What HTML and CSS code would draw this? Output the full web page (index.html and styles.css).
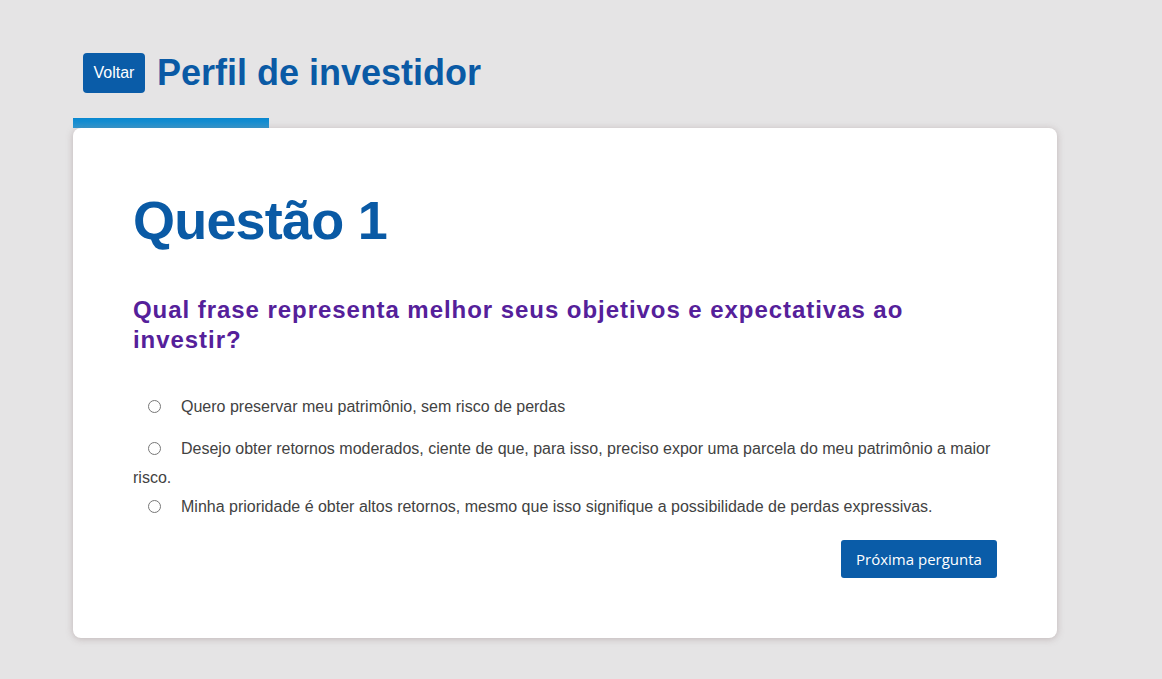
FILE: index.html
```html
<!DOCTYPE html>
<html lang="pt-BR">
<head>
<meta charset="utf-8">
<title>Perfil de investidor</title>
<link rel="stylesheet" href="styles.css">
</head>
<body>
<div class="page">
  <header class="header">
    <button class="back">Voltar</button>
    <h1 class="title">Perfil de investidor</h1>
  </header>
  <div class="tab-bar"></div>
  <main class="card">
    <h2 class="q-number">Questão 1</h2>
    <h3 class="q-text">Qual frase representa melhor seus objetivos e expectativas ao investir?</h3>
    <div class="options">
      <label class="option first"><span class="radio"></span>Quero preservar meu patrimônio, sem risco de perdas</label>
      <label class="option"><span class="radio"></span>Desejo obter retornos moderados, ciente de que, para isso, preciso expor uma parcela do meu patrimônio a maior risco.</label>
      <label class="option"><span class="radio"></span>Minha prioridade é obter altos retornos, mesmo que isso signifique a possibilidade de perdas expressivas.</label>
    </div>
    <div class="actions">
      <button class="next">Próxima pergunta</button>
    </div>
  </main>
</div>
</body>
</html>
```

FILE: styles.css
```css
html, body {
  margin: 0;
  padding: 0;
  background: #e5e4e5;
  font-family: "Liberation Sans", Arial, sans-serif;
}

.page {
  width: 984px;
  padding: 53px 0 40px 73px;
}

.header {
  display: flex;
  align-items: center;
  gap: 12px;
  padding-left: 10px;
  height: 40px;
}

.back {
  width: 62px;
  height: 40px;
  border: none;
  border-radius: 4px;
  background: #0a5ca8;
  color: #fff;
  font-family: "Liberation Sans", Arial, sans-serif;
  font-size: 16px;
  padding: 0;
}

.title {
  margin: 0;
  font-size: 36px;
  font-weight: bold;
  color: #0a5aa5;
  line-height: 40px;
}

.tab-bar {
  margin-top: 25px;
  width: 196px;
  height: 10px;
  background: linear-gradient(#0787d0, #2f98d2);
}

.card {
  background: #fff;
  border-radius: 8px;
  box-shadow: 0 1px 7px rgba(120, 95, 95, 0.35);
  padding: 60px;
  height: 390px;
}

.q-number {
  margin: 0;
  font-size: 54px;
  letter-spacing: -0.8px;
  line-height: 64px;
  font-weight: bold;
  color: #0a5aa5;
}

.q-text {
  margin: 43px 0 0;
  font-size: 24px;
  letter-spacing: 0.95px;
  line-height: 30px;
  font-weight: bold;
  color: #55209a;
}

.options {
  margin-top: 37px;
  font-size: 16px;
  line-height: 29px;
  color: #424242;
}

.option {
  display: block;
}

.option.first {
  margin-bottom: 13px;
}

.radio {
  display: inline-block;
  box-sizing: border-box;
  width: 13px;
  height: 13px;
  border: 1px solid #777;
  border-radius: 50%;
  background: #fff;
  margin: 0 20px 0 15px;
  vertical-align: -1px;
}

.actions {
  display: flex;
  justify-content: flex-end;
  margin-top: 19px;
}

.next {
  width: 156px;
  height: 38px;
  border: none;
  border-radius: 3px;
  background: #0a5ca8;
  color: #fff;
  font-family: "Open Sans", sans-serif;
  font-size: 15px;
  padding: 0;
}
```
